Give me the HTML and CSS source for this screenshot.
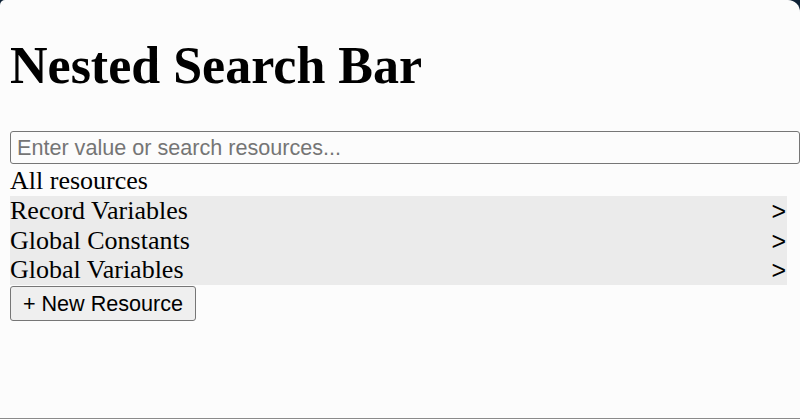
FILE: index.html
```html
<!DOCTYPE html>
<html>
<head>
<meta charset="utf-8">
<link rel="stylesheet" href="styles.css">
</head>
<body>
<div class="page">
  <h1 class="title">Nested Search Bar</h1>
  <input class="search" type="text" placeholder="Enter value or search resources...">
  <div class="list">
    <div class="heading">All resources</div>
    <div class="row"><span>Record Variables</span><span class="chev">&gt;</span></div>
    <div class="row"><span>Global Constants</span><span class="chev">&gt;</span></div>
    <div class="row"><span>Global Variables</span><span class="chev">&gt;</span></div>
  </div>
  <button class="new-btn">+ New Resource</button>
</div>
</body>
</html>
```
FILE: styles.css
```css
html {
  background: #0e2236;
  height: 100%;
}
body {
  margin: 0;
  height: 100%;
  font-family: "Liberation Serif", "Times New Roman", serif;
}
.page {
  box-sizing: border-box;
  height: 419px;
  background: #fcfcfc;
  border-radius: 5px 12px 0 0;
  border-bottom: 1px solid #8a8a8a;
  padding: 0 13px 0 10px;
  overflow: hidden;
}
.title {
  margin: 0;
  padding-top: 36px;
  font-size: 52px;
  font-weight: bold;
  line-height: 59px;
  color: #000;
}
.search {
  display: block;
  box-sizing: border-box;
  width: 790px;
  height: 33px;
  margin: 36px 0 2px;
  padding: 0 6px;
  border: 1.5px solid #767676;
  border-radius: 3px;
  background: #fcfcfc;
  font-family: "Liberation Sans", Arial, sans-serif;
  font-size: 21.6px;
  color: #000;
}
.search::placeholder {
  color: #757575;
}
.list {
  font-size: 26px;
  line-height: 30px;
  color: #000;
}
.heading {
  height: 30px;
}
.row {
  display: flex;
  justify-content: space-between;
  height: 29.7px;
  background: #ebebeb;
}
.chev {
  font-family: "Liberation Sans", Arial, sans-serif;
  font-size: 25px;
  padding-right: 1px;
}
.new-btn {
  display: block;
  box-sizing: border-box;
  width: 186px;
  height: 35px;
  margin-top: 1px;
  padding: 0;
  border: 1.5px solid #767676;
  border-radius: 3px;
  background: #efefef;
  font-family: "Liberation Sans", Arial, sans-serif;
  font-size: 21.6px;
  color: #000;
}
```
